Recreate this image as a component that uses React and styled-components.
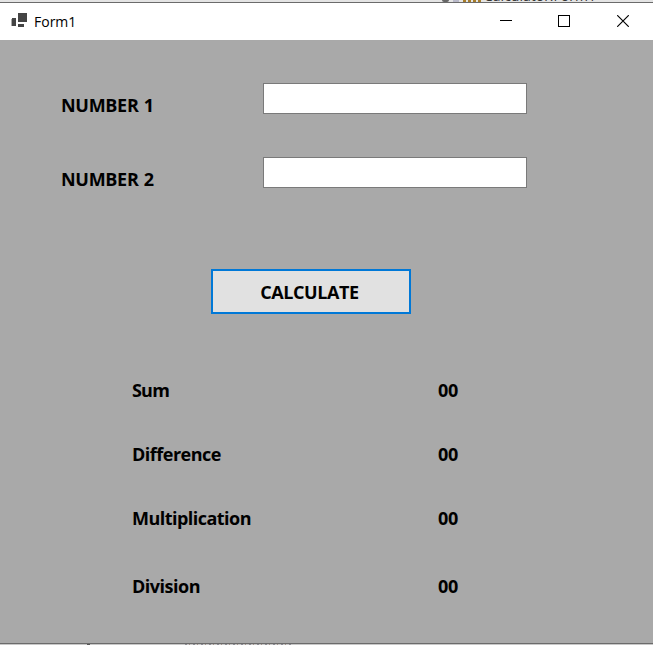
import React from "react";
import styled, { createGlobalStyle } from "styled-components";

const GlobalStyle = createGlobalStyle`
  * { box-sizing: border-box; }
  body { margin: 0; overflow: hidden; background: #e3e3e3; }
`;

const Desktop = styled.div`
  display: flex;
  flex-direction: column;
  width: 653px;
  height: 645px;
  overflow: hidden;
  font-family: "Open Sans", "Noto Sans", sans-serif;
  color: #000;
`;

const TopStrip = styled.div`
  display: flex;
  align-items: flex-end;
  height: 2px;
  padding-left: 442px;
  overflow: hidden;
  background: #e4e4e4;
`;

const ArrowTip = styled.span`
  width: 7px;
  height: 2px;
  margin-right: 4px;
  border-radius: 0 0 4px 4px;
  background: #666;
`;

const FileMark = styled.span`
  width: 6px;
  height: 2px;
  margin-right: 4px;
  background: #b9b9c9;
`;

const ClassMark = styled.span`
  width: 18px;
  height: 2px;
  margin-right: 3px;
  background: repeating-linear-gradient(90deg, #a87d28 0 3px, #e4e4e4 3px 5px);
`;

const BackText = styled.span`
  flex: none;
  height: 13px;
  font-size: 14px;
  line-height: 14px;
  color: #333;
  white-space: nowrap;
`;

const Window = styled.main`
  display: flex;
  flex-direction: column;
  flex: none;
  height: 642px;
  border-top: 1px solid #6b6b6b;
  border-bottom: 1px solid #6b6b6b;
  background: #a9a9a9;
`;

const TitleBar = styled.header`
  display: flex;
  flex: none;
  align-items: center;
  height: 37px;
  padding-left: 11px;
  background: #fff;
`;

const Title = styled.h1`
  flex: 1;
  margin: 0 0 0 7px;
  font-size: 14px;
  line-height: 37px;
  font-weight: 400;
`;

const Controls = styled.div`
  display: flex;
  height: 37px;
  padding-right: 1px;
`;

const ControlButton = styled.button`
  display: flex;
  align-items: center;
  justify-content: center;
  width: 58.5px;
  height: 37px;
  padding: 0 0 1px;
  border: 0;
  background: transparent;
`;

const Form = styled.form`
  display: flex;
  flex-direction: column;
  padding-top: 43px;
`;

const Field = styled.label`
  display: grid;
  grid-template-columns: 202px 264px;
  height: 31px;
  margin: 0 0 43px 61px;
`;

const Label = styled.span`
  font-size: 18px;
  font-weight: 700;
  line-height: 24px;
  letter-spacing: ${(p) => p.$spacing || 0}px;
  white-space: nowrap;
`;

const FieldLabel = styled(Label)`
  padding-top: 10px;
  word-spacing: 1px;
`;

const Input = styled.input`
  width: 264px;
  height: 31px;
  padding: 3px 5px;
  border: 1px solid #7a7a7a;
  border-radius: 0;
  outline: 0;
  background: #fff;
  font: 18px "Open Sans", sans-serif;
`;

const CalculateButton = styled.button`
  width: 200px;
  height: 45px;
  margin: 38px 0 0 211px;
  padding: 0 3px 0 0;
  border: 2px solid #0078d7;
  background: #e1e1e1;
  color: #000;
  font-family: inherit;
`;

const Results = styled.div`
  display: grid;
  grid-template-columns: 306px 60px;
  grid-template-rows: 64px 64px 68px 24px;
  margin: 64px 0 0 132px;
`;

const BottomStrip = styled.div`
  display: flex;
  flex: none;
  height: 1px;
  padding-left: 87px;
  background: #c8c8c8;
`;

const BottomTick = styled.span`
  width: 3px;
  height: 1px;
  margin-right: 95px;
  background: #555;
`;

const BottomMarks = styled.span`
  width: 108px;
  height: 1px;
  background: repeating-linear-gradient(90deg, #8b8b92 0 2px, #c8c8c8 2px 4px, #a1928a 4px 5px, #c8c8c8 5px 8px);
`;

const results = [
  { name: "Sum", value: "00", spacing: -0.8 },
  { name: "Difference", value: "00", spacing: -0.5 },
  { name: "Multiplication", value: "00", spacing: -0.53 },
  { name: "Division", value: "00", spacing: -0.5 },
];

function FormIcon() {
  return (
    <svg width="16" height="17" viewBox="0 0 16 17" shapeRendering="crispEdges" fill="#444">
      <rect x="7" y="0" width="9" height="9" />
      <rect x="1" y="5" width="4" height="8" />
      <rect x="0" y="6" width="1" height="7" opacity=".45" />
      <rect x="7" y="11" width="6" height="3" />
    </svg>
  );
}

function ControlIcon({ kind }) {
  return (
    <svg width="12" height="12" viewBox="0 0 12 12" fill="none" stroke="#000" strokeWidth="1">
      {kind === "Minimize" && <path d="M0 5.5H12" shapeRendering="crispEdges" />}
      {kind === "Maximize" && <path d="M.5 .5H11.5V11.5H.5Z" shapeRendering="crispEdges" />}
      {kind === "Close" && <path d="M.2 .2L11.8 11.8M11.8 .2L.2 11.8" strokeWidth="1.15" />}
    </svg>
  );
}

export default function App() {
  return (
    <Desktop>
      <GlobalStyle />
      <TopStrip>
        <ArrowTip />
        <FileMark />
        <ClassMark />
        <BackText>Calculator.Form1</BackText>
      </TopStrip>
      <Window>
        <TitleBar>
          <FormIcon />
          <Title>Form1</Title>
          <Controls>
            {["Minimize", "Maximize", "Close"].map((kind) => (
              <ControlButton key={kind} aria-label={kind}>
                <ControlIcon kind={kind} />
              </ControlButton>
            ))}
          </Controls>
        </TitleBar>
        <Form onSubmit={(event) => event.preventDefault()}>
          {["NUMBER 1", "NUMBER 2"].map((name) => (
            <Field key={name}>
              <FieldLabel $spacing={-0.3}>{name}</FieldLabel>
              <Input />
            </Field>
          ))}
          <CalculateButton>
            <Label $spacing={-0.4}>CALCULATE</Label>
          </CalculateButton>
          <Results>
            {results.map((row) => (
              <React.Fragment key={row.name}>
                <Label $spacing={row.spacing}>{row.name}</Label>
                <Label $spacing={-0.3}>{row.value}</Label>
              </React.Fragment>
            ))}
          </Results>
        </Form>
      </Window>
      <BottomStrip>
        <BottomTick />
        <BottomMarks />
      </BottomStrip>
    </Desktop>
  );
}
